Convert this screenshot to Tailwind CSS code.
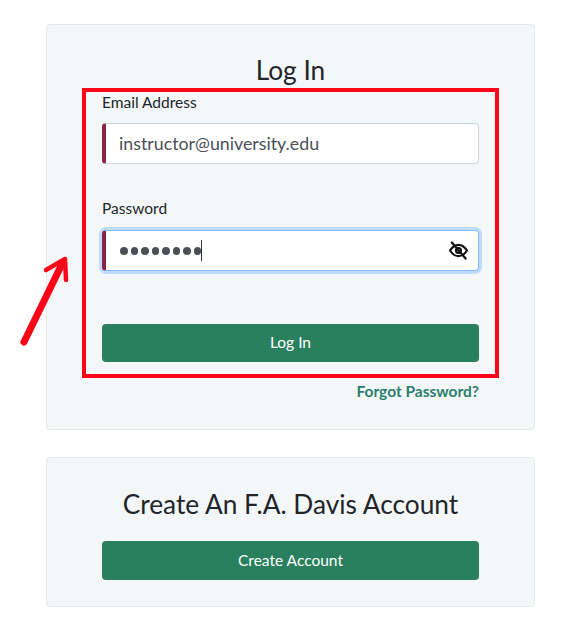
<!doctype html>
<html>
<head>
<meta charset="utf-8">
<script src="https://cdn.jsdelivr.net/npm/@tailwindcss/browser@4"></script>
</head>
<body class="bg-white font-['Lato','Noto_Sans',sans-serif] text-[#212529]">
<div class="relative w-[573px] h-[639px] overflow-hidden pt-[24px] pl-[46px]">
  <section class="w-[489px] h-[406px] rounded-[4px] border border-[#e6e8ea] bg-[#f4f7f8] px-[55px] pt-[28px]">
    <h1 class="text-center text-[26.25px] leading-[34px] font-normal">Log In</h1>
    <label class="block mt-[5px] text-[15.5px] leading-[20px]">Email Address</label>
    <div class="mt-[11px] h-[41px] flex items-center rounded-[4px] border border-[#ced4da] border-l-[4px] border-l-[#8a2545] bg-white pl-[13px] text-[17.8px] leading-[27px] text-[#495057]">instructor@university.edu</div>
    <label class="block mt-[34px] text-[15.5px] leading-[20px]">Password</label>
    <div class="mt-[12px] h-[41px] flex items-center justify-between rounded-[4px] border border-[#80bdff] border-l-[4px] border-l-[#8a2545] bg-white pl-[13px] pr-[10px] shadow-[0_0_0_3px_#bfdcfd]">
      <div class="flex items-center">
        <span class="flex gap-[3px] pl-[1px] pt-[1px]">
          <i class="block w-[7.5px] h-[7.5px] rounded-full bg-[#495057]"></i><i class="block w-[7.5px] h-[7.5px] rounded-full bg-[#495057]"></i><i class="block w-[7.5px] h-[7.5px] rounded-full bg-[#495057]"></i><i class="block w-[7.5px] h-[7.5px] rounded-full bg-[#495057]"></i><i class="block w-[7.5px] h-[7.5px] rounded-full bg-[#495057]"></i><i class="block w-[7.5px] h-[7.5px] rounded-full bg-[#495057]"></i><i class="block w-[7.5px] h-[7.5px] rounded-full bg-[#495057]"></i><i class="block w-[7.5px] h-[7.5px] rounded-full bg-[#495057]"></i>
        </span>
        <span class="block w-px h-[21px] bg-[#333]"></span>
      </div>
      <svg class="w-[19px] h-[19px]" viewBox="0 0 20 20" fill="none" stroke="#111" stroke-width="2.3" stroke-linecap="round" stroke-linejoin="round" aria-hidden="true">
        <path d="M1 10 C4 5.5 7 4 10 4 C13 4 16 5.5 19 10 C16 14.5 13 16 10 16 C7 16 4 14.5 1 10Z"/>
        <circle cx="10" cy="10" r="2.6"/>
        <path d="M3 1.5 L17.5 18.5"/>
      </svg>
    </div>
    <button class="mt-[53px] block w-full h-[38px] rounded-[4px] bg-[#2a7f5e] text-white text-[15.5px]">Log In</button>
    <p class="mt-[19px] text-right text-[15.5px] leading-[20px] font-bold text-[#2a7f6c]">Forgot Password?</p>
  </section>
  <section class="mt-[27px] w-[489px] h-[150px] rounded-[4px] border border-[#e6e8ea] bg-[#f4f7f8] px-[55px] pt-[29px]">
    <h2 class="text-center text-[26.25px] leading-[34px] font-normal">Create An F.A. Davis Account</h2>
    <button class="mt-[20px] block w-full h-[39px] rounded-[4px] bg-[#2a7f5e] text-white text-[15.5px]">Create Account</button>
  </section>
  <div class="absolute left-[82px] top-[88px] w-[417px] h-[290px] border-[4px] border-[#fb0518]"></div>
  <svg class="absolute left-[15px] top-[250px] w-[60px] h-[100px]" viewBox="0 0 60 100" aria-hidden="true">
    <path d="M9 92 L47 14" fill="none" stroke="#fb0518" stroke-width="7" stroke-linecap="round"/>
    <path d="M31 20 L50 9 L51 30" fill="none" stroke="#fb0518" stroke-width="4.5" stroke-linecap="round" stroke-linejoin="round"/>
  </svg>
</div>
</body>
</html>
